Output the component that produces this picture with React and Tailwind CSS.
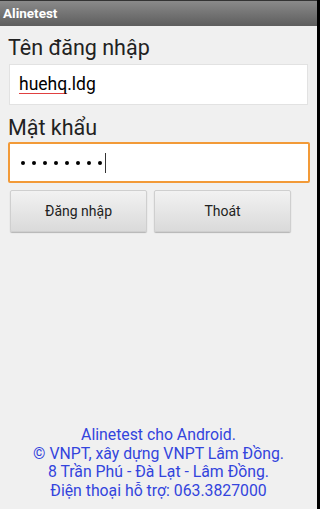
export default function App() {
  const dots = [0, 1, 2, 3, 4, 5, 6, 7];
  return (
    <div className="flex h-[509px] w-[320px] bg-black font-['Roboto',sans-serif]">
      <div className="flex h-full w-[317px] flex-col bg-[#f0f0f0]">
        <div className="flex h-[26px] items-center border-t border-[#333] bg-gradient-to-b from-[#8a8a8a] to-[#5e5e5e] px-[3px]">
          <span className="text-[13.5px] font-bold text-white">Alinetest</span>
        </div>

        <div className="flex flex-col px-[8px]">
          <label className="mt-[7px] text-[21.5px] leading-[30px] text-[#222]">Tên đăng nhập</label>
          <div className="mt-[1px] ml-[1px] flex h-[41px] w-[299px] items-center border border-[#e2e2e2] bg-white px-[9px] text-[17.5px] text-black">
            <span className="underline decoration-[#e04040] decoration-[1px] underline-offset-[3px]">huehq</span>
            <span>.ldg</span>
          </div>

          <label className="mt-[9px] text-[21.5px] leading-[27px] text-[#222]">Mật khẩu</label>
          <div className="mt-[1px] flex h-[41px] w-[302px] items-center rounded-[2px] border-2 border-[#f29a38] bg-white pl-[11px]">
            <div className="flex gap-[7px]">
              {dots.map((d) => (
                <span key={d} className="h-[4px] w-[4px] rounded-full bg-black" />
              ))}
            </div>
            <span className="ml-[3px] h-[20px] w-[1px] bg-[#333]" />
          </div>

          <div className="mt-[7px] ml-[2px] flex gap-[7px]">
            <button className="h-[42px] w-[137px] rounded-[2px] border border-[#cfcfcf] bg-gradient-to-b from-[#f2f2f2] to-[#dadada] text-[14px] text-[#222] shadow-[0_1px_1px_rgba(0,0,0,0.25)]">
              Đăng nhập
            </button>
            <button className="h-[42px] w-[137px] rounded-[2px] border border-[#cfcfcf] bg-gradient-to-b from-[#f2f2f2] to-[#dadada] text-[14px] text-[#222] shadow-[0_1px_1px_rgba(0,0,0,0.25)]">
              Thoát
            </button>
          </div>
        </div>

        <div className="mt-auto mb-[9px] flex flex-col items-center text-[15.8px] leading-[18.5px] text-[#3344dd]">
          <p>Alinetest cho Android.</p>
          <p>© VNPT, xây dựng VNPT Lâm Đồng.</p>
          <p>8 Trần Phú - Đà Lạt - Lâm Đồng.</p>
          <p>Điện thoại hỗ trợ: 063.3827000</p>
        </div>
      </div>
    </div>
  );
}
